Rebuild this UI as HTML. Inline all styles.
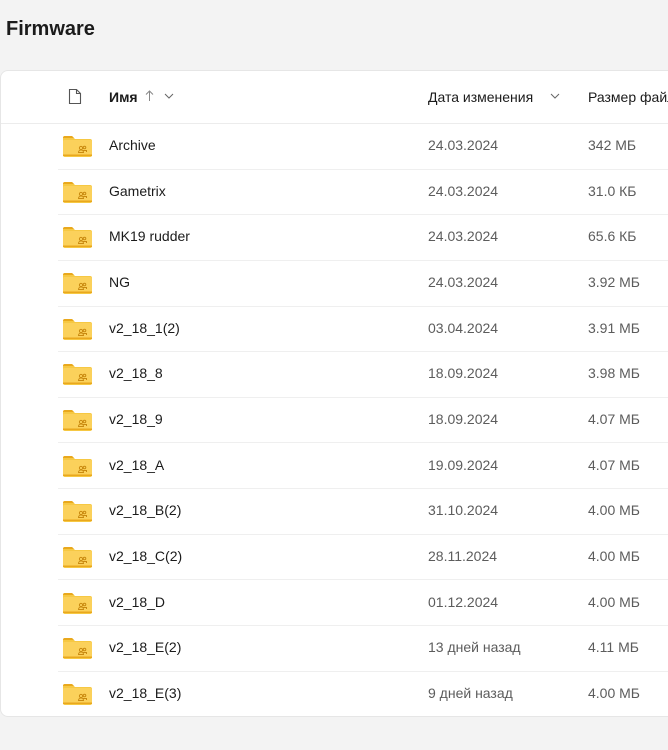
<!DOCTYPE html>
<html><head><meta charset="utf-8"><style>
body{margin:0;width:668px;height:750px;background:#f3f3f3;font-family:"Liberation Sans",sans-serif;overflow:hidden;position:relative}
h1{position:absolute;left:6px;top:18px;margin:0;font-size:20px;font-weight:bold;color:#1b1b1b}
.card{position:absolute;left:0;top:70px;width:700px;height:645px;background:#fff;border-radius:8px;border:1px solid #e6e6e6}
.hdr{position:absolute;top:0;left:0;right:0;height:52px;border-bottom:1px solid #ececec;font-size:14px;color:#1b1b1b}
.row{position:absolute;left:57px;width:650px;height:45.6px;border-bottom:1px solid #efefef;font-size:14px}
.row:last-child{border-bottom:none}
.n{position:absolute;left:51px;top:14px;color:#1b1b1b}
.d{position:absolute;left:370px;top:14px;color:#5c5c5c}
.s{position:absolute;left:530px;top:14px;color:#5c5c5c}
.f{position:absolute;left:4px;top:12px}
</style></head><body>
<h1>Firmware</h1>
<div class="card">
<div class="hdr">
<svg style="position:absolute;left:67px;top:17px" width="14" height="17" viewBox="0 0 14 17"><path d="M1.5 1.5h7l4 4v10h-11z M8.5 1.5v4h4" fill="none" stroke="#555" stroke-width="1.1"/></svg>
<span style="position:absolute;left:108px;top:18px;font-weight:bold">Имя</span>
<svg style="position:absolute;left:144px;top:19px" width="9" height="12"><path d="M4.5 11V1M1 4.5l3.5-3.5 3.5 3.5" fill="none" stroke="#888"/></svg>
<svg style="position:absolute;left:163px;top:22px" width="10" height="6"><path d="M1 1l4 4 4-4" fill="none" stroke="#666"/></svg>
<span style="position:absolute;left:427px;top:18px">Дата изменения</span>
<svg style="position:absolute;left:549px;top:22px" width="10" height="6"><path d="M1 1l4 4 4-4" fill="none" stroke="#666"/></svg>
<span style="position:absolute;left:587px;top:18px;white-space:nowrap">Размер файла</span>
</div>
<div id="rows"></div>
</div>
<script>
var d=[["Archive","24.03.2024","342 МБ"],["Gametrix","24.03.2024","31.0 КБ"],["MK19 rudder","24.03.2024","65.6 КБ"],["NG","24.03.2024","3.92 МБ"],["v2_18_1(2)","03.04.2024","3.91 МБ"],["v2_18_8","18.09.2024","3.98 МБ"],["v2_18_9","18.09.2024","4.07 МБ"],["v2_18_A","19.09.2024","4.07 МБ"],["v2_18_B(2)","31.10.2024","4.00 МБ"],["v2_18_C(2)","28.11.2024","4.00 МБ"],["v2_18_D","01.12.2024","4.00 МБ"],["v2_18_E(2)","13 дней назад","4.11 МБ"],["v2_18_E(3)","9 дней назад","4.00 МБ"]];
var h="";
var icon='<svg class="f" width="31" height="22" viewBox="0 0 31 22"><path d="M1 3a2 2 0 0 1 2-2h7l3 3h15a2 2 0 0 1 2 2v14a2 2 0 0 1-2 2H3a2 2 0 0 1-2-2z" fill="#f6c843"/><path d="M1 3a2 2 0 0 1 2-2h7l2 2z" fill="#e9a81d"/><rect x="1" y="5" width="29" height="16" rx="1.5" fill="#fbd15b"/><rect x="1" y="19.5" width="29" height="1.5" fill="#e9a81d"/><g fill="none" stroke="#c98a10" stroke-width="1"><circle cx="19" cy="13" r="1.6"/><circle cx="22.5" cy="12.5" r="1.3"/><path d="M16.5 17.5a2.5 2.5 0 0 1 5 0zM21 15.5h3.5v1.5"/></g></svg>';
for(var i=0;i<d.length;i++){h+='<div class="row" style="top:'+(52+i*45.65)+'px">'+icon+'<span class="n">'+d[i][0]+'</span><span class="d">'+d[i][1]+'</span><span class="s">'+d[i][2]+'</span></div>';}
document.getElementById("rows").innerHTML=h;
</script>
</body></html>
